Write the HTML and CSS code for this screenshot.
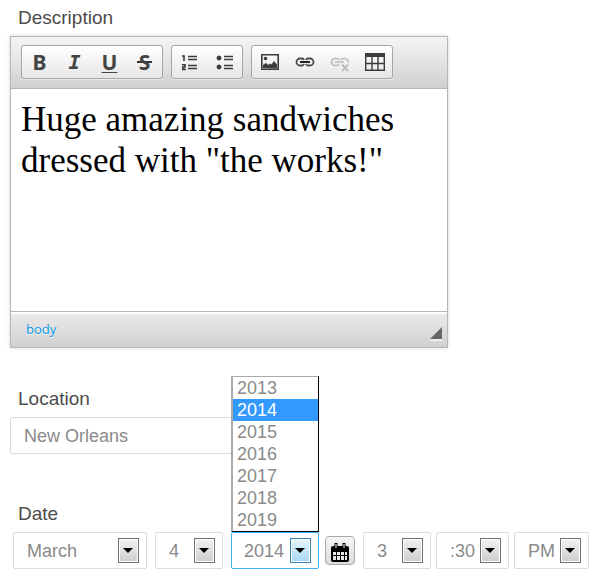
FILE: index.html
```html
<!DOCTYPE html>
<html lang="en">
<head>
<meta charset="utf-8">
<meta name="viewport" content="width=device-width, initial-scale=1">
<title>Event details</title>
<link rel="stylesheet" href="styles.css">
</head>
<body>
<form class="form">
  <div class="field">
    <label class="label" for="description">Description</label>
    <div class="editor">
      <div class="toolbar" role="toolbar" aria-label="Formatting">
        <div class="group">
          <button type="button" class="tool" aria-label="Bold"><b class="glyph">B</b></button>
          <button type="button" class="tool" aria-label="Italic"><i class="glyph">I</i></button>
          <button type="button" class="tool" aria-label="Underline"><u class="glyph">U</u></button>
          <button type="button" class="tool" aria-label="Strikethrough"><s class="glyph">S</s></button>
        </div>
        <div class="group">
          <button type="button" class="tool" aria-label="Numbered list">
            <svg width="20" height="20" viewBox="0 0 20 20" fill="none" stroke="#3b3b3b"><path stroke-width="1.6" d="M8 4.5h9M8 7.5h9M8 13.5h9M8 16.5h9"/><path stroke-width="1.6" d="M2 4h2v5M2 12.800h3v2.200H2.800v2.400h3"/></svg>
          </button>
          <button type="button" class="tool" aria-label="Bulleted list">
            <svg width="20" height="20" viewBox="0 0 20 20" fill="#3b3b3b" stroke="#3b3b3b"><path stroke-width="1.6" d="M9 4.5h9M9 7.500h9M9 13.500h9M9 16.500h9"/><circle cx="4" cy="6" r="2"/><circle cx="4" cy="15" r="2"/></svg>
          </button>
        </div>
        <div class="group">
          <button type="button" class="tool" aria-label="Image">
            <svg width="20" height="20" viewBox="0 0 20 20" fill="#3b3b3b"><path fill="none" stroke="#3b3b3b" stroke-width="1.6" d="M1.800 2.800h16.400v14.400H1.800z"/><circle cx="5.500" cy="6.500" r="1.800"/><path d="M3 16v-3l3-2 2.500 2 1.500-1.500 1.500 1 2.500-3.500 3 3.500v4z"/></svg>
          </button>
          <button type="button" class="tool" aria-label="Link">
            <svg width="20" height="20" viewBox="0 0 20 20" fill="none" stroke="#4a4a4a" stroke-width="1.800"><path d="M9 8Q8.500 6.500 7 6.500H5a3.500 3.500 0 0 0 0 7h2q1.500 0 2-1.500M11 8q.5-1.500 2-1.500h2a3.500 3.500 0 0 1 0 7h-2q-1.500 0-2-1.500"/><path stroke="#222" stroke-width="2" d="M5 10h10"/></svg>
          </button>
          <button type="button" class="tool" aria-label="Unlink" disabled>
            <svg width="20" height="20" viewBox="0 0 20 20" fill="none" stroke="#bdbdbd" stroke-width="1.700"><path d="M9 8Q8.500 6.500 7 6.500H5a3.500 3.500 0 0 0 0 7h2q1.500 0 2-1.500M11 8q.5-1.500 2-1.500h2a3.500 3.500 0 0 1 3.300 4M5 10h9"/><path stroke-width="2" d="m12 12.500 6 6.500m0-6.500-6 6.500"/></svg>
          </button>
          <button type="button" class="tool" aria-label="Table">
            <svg width="20" height="20" viewBox="0 0 20 20" fill="none" stroke="#3b3b3b"><path fill="#3b3b3b" stroke="none" d="M0 1h20v4H0z"/><path stroke-width="1.400" d="M.7 4v14.300h18.600V4M.7 11.500h18.600M7 4v14M13 4v14"/></svg>
          </button>
        </div>
      </div>
      <textarea class="content" id="description">Huge amazing sandwiches dressed with "the works!"</textarea>
      <div class="status">
        <a class="path" href="#description">body</a>
        <svg class="grip" width="12" height="14" viewBox="0 0 12 14" aria-hidden="true"><path fill="#eee" d="M0 12h12v2H0z"/><path fill="#666" d="M12 0v12H0z"/></svg>
      </div>
    </div>
  </div>

  <div class="field location">
    <label class="label" for="location">Location</label>
    <input class="input" id="location" type="text" value="New Orleans">
  </div>

  <div class="field date">
    <label class="label" for="month">Date</label>
    <div class="row">
      <div class="parts">
        <div class="drop month"><select id="month" aria-label="Month"><option>March</option></select></div>
        <div class="drop short"><select aria-label="Day"><option>4</option></select></div>
        <div class="drop year open">
          <select aria-label="Year"><option>2014</option></select>
          <ul class="menu" role="listbox" aria-label="Year">
            <li role="option">2013</li>
            <li role="option" aria-selected="true">2014</li>
            <li role="option">2015</li>
            <li role="option">2016</li>
            <li role="option">2017</li>
            <li role="option">2018</li>
            <li role="option">2019</li>
          </ul>
        </div>
      </div>
      <button type="button" class="calendar" aria-label="Pick a date">
        <svg width="18" height="19" viewBox="0 0 18 19"><path d="M0 5q0-2 2-2h14q2 0 2 2v12q0 2-2 2H2q-2 0-2-2z"/><path fill="#e6e6e6" d="M2 9h3v3H2zM6 9h3v3H6zM10 9h3v3h-3zM14 9h2v3h-2zM2 13h3v4H2zM6 13h3v4H6zM10 13h3v4h-3zM14 13h2v4h-2z"/><path fill="none" stroke="#000" stroke-width="3" d="M5 0v6M13 0v6"/><path fill="none" stroke="#fff" d="M5 1v4M13 1v4"/></svg>
      </button>
      <div class="parts time">
        <div class="drop short"><select aria-label="Hour"><option>3</option></select></div>
        <div class="drop minute"><select aria-label="Minute"><option>:30</option></select></div>
        <div class="drop half"><select aria-label="AM or PM"><option>PM</option></select></div>
      </div>
    </div>
  </div>
</form>
</body>
</html>
```
FILE: styles.css
```css
*,
*::before { box-sizing: border-box; }

body {
  margin: 0;
  background: #fff;
  color: #4c4c4c;
  font-family: "Liberation Sans", Arial, sans-serif;
  font-size: 18px;
}

.form { padding: 6px 10px; }

.label {
  display: block;
  margin: 0 0 6px 8px;
  font-size: 19px;
  line-height: 24px;
}

.location { margin-top: 39px; }
.date { margin-top: 48px; }

.editor {
  max-width: 438px;
  border: 1px solid #b6b6b6;
  box-shadow: 0 0 4px rgba(0, 0, 0, 0.16);
}

.toolbar {
  display: flex;
  flex-wrap: wrap;
  gap: 8px;
  padding: 8px 10px 9px;
  border-bottom: 1px solid #b6b6b6;
  background: linear-gradient(#f5f5f5, #cfd1cf);
}

.group {
  display: flex;
  border: 1px solid #a6a6a6;
  border-radius: 3px;
  background: linear-gradient(#fff, #e6e6e6);
  box-shadow: 0 1px 0 rgba(255, 255, 255, 0.5);
}

.tool {
  display: flex;
  align-items: center;
  justify-content: center;
  width: 35px;
  height: 32px;
  padding: 0;
  border: 0;
  background: none;
}

.glyph {
  padding: 0 1px;
  color: #444;
  font: bold 21px/24px "Noto Sans", sans-serif;
}

i.glyph { font: italic bold 20px/24px "DejaVu Sans Mono", monospace; }
u.glyph { text-decoration-thickness: 1px; text-underline-offset: 2px; }
s.glyph {
  padding: 0 2px;
  background: linear-gradient(#333, #333) center / 100% 2px no-repeat;
  text-decoration: none;
}

.content {
  display: block;
  width: 100%;
  height: 222px;
  padding: 10px;
  border: 0;
  outline: 0;
  resize: none;
  overflow: hidden;
  color: #000;
  font: 35px/41px "Liberation Serif", "Times New Roman", serif;
}

.status {
  display: flex;
  align-items: center;
  justify-content: space-between;
  height: 36px;
  padding: 0 5px 2px 15px;
  border-top: 1px solid #b6b6b6;
  box-shadow: inset 0 2px 0 #fff;
  background: linear-gradient(#ebebeb, #cfd1cf);
}

.path {
  color: #0a96e6;
  font: 13px/18px "Open Sans", sans-serif;
  text-decoration: none;
  text-shadow: 0 1px 0 #fff;
}

.grip { align-self: flex-end; margin-bottom: 4px; }

.input,
.drop select {
  display: block;
  width: 100%;
  height: 37px;
  padding: 1px 13px 0;
  border: 1px solid #dcdcdc;
  border-radius: 2px;
  outline: 0;
  background: #fff;
  color: #8a8a8a;
  font: 18px/22px "Liberation Sans", Arial, sans-serif;
}

.input { max-width: 290px; }

.row {
  display: flex;
  align-items: center;
  margin-left: 3px;
}

.parts { display: flex; gap: 8px; }
.time { gap: 5px; }

.drop { position: relative; }
.drop select { appearance: none; padding: 0 0 0 13px; }

.drop::before {
  content: "";
  position: absolute;
  top: 6px;
  right: 8px;
  width: 21px;
  height: 25px;
  border: 1px solid #707070;
  box-shadow: inset 0 0 0 1px #fff;
  background: linear-gradient(#f2f2f2, #cdcdcd);
  pointer-events: none;
}

.drop::after {
  content: "";
  position: absolute;
  top: 16px;
  right: 14px;
  border: solid transparent;
  border-width: 5px 5px 0;
  border-top-color: #000;
  pointer-events: none;
}

.month { width: 134px; }
.short { width: 68px; }
.year { width: 88px; }
.minute { width: 73px; }
.half { width: 75px; }

.drop.open select { padding-left: 12px; border-color: #38b4f5; }
.open::before {
  border-color: #3c7fb1;
  background: linear-gradient(#e8f5fc, #a6d8f4);
}

.menu {
  position: absolute;
  bottom: 100%;
  left: 0;
  width: 100%;
  margin: 0;
  padding: 0;
  border: 1px solid #000;
  border-top-color: #aaa;
  border-left: 2px solid #aaa;
  background: #fff;
  color: #8a8a8a;
  line-height: 22px;
  list-style: none;
}

.menu li { padding-left: 4px; }
.menu [aria-selected="true"] { background: #3399ff; color: #fff; }

.calendar {
  display: flex;
  align-items: center;
  justify-content: center;
  width: 30px;
  height: 29px;
  margin: 0 8px 0 6px;
  padding: 3px 0 0;
  border: 1px solid #aaa;
  border-radius: 4px;
  background: linear-gradient(#f5f5f5, #dcdcdc);
}
```
